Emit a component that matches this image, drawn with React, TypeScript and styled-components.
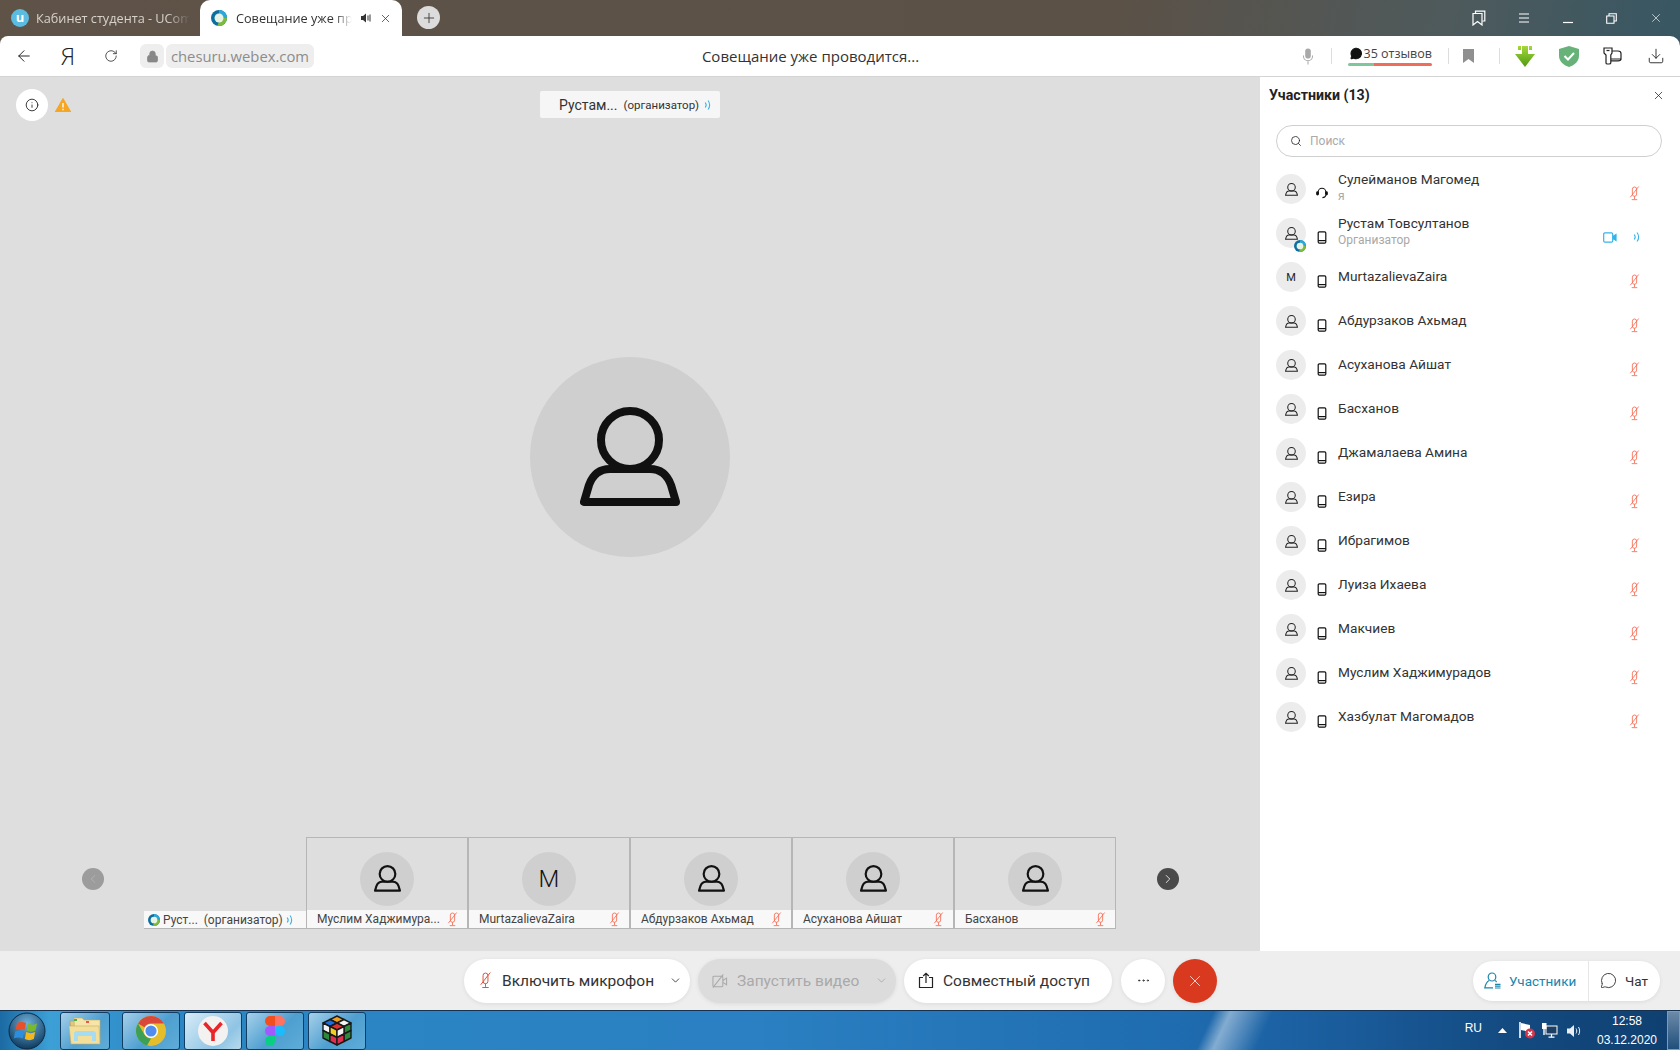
import styled, { createGlobalStyle } from "styled-components";
import { ArrowLeft, RotateCw, Lock, Search, X, Plus, Info, ChevronDown, ChevronLeft, ChevronRight, Download, MessageCircle, Ellipsis } from "lucide-react";

const GlobalStyle = createGlobalStyle`
  html, body { margin: 0; padding: 0; }
  body { width: 1680px; height: 1050px; overflow: hidden; font-family: Roboto, "Liberation Sans", sans-serif; }
  * { box-sizing: border-box; }
`;

const Page = styled.div`
  width: 1680px;
  height: 1050px;
  display: flex;
  flex-direction: column;
  background: linear-gradient(100deg, #5f5348 0%, #5b5147 60%, #4e5a5c 78%, #265468 100%);
`;

/* browser chrome */
const TabBar = styled.div`
  height: 36px;
  display: flex;
  align-items: stretch;
  padding-right: 0;
`;

const Tab = styled.div<{ $active?: boolean }>`
  width: ${(p) => (p.$active ? "202px" : "200px")};
  display: flex;
  align-items: center;
  padding-left: 11px;
  gap: ${(p) => (p.$active ? "9px" : "7px")};
  background: ${(p) => (p.$active ? "#fff" : "transparent")};
  border-radius: 10px 10px 0 0;
  color: ${(p) => (p.$active ? "#333" : "#d8d2cc")};
  font: 12.7px "Open Sans", sans-serif;
`;

const TabLabel = styled.span<{ $width: number }>`
  width: ${(p) => p.$width}px;
  overflow: hidden;
  white-space: nowrap;
  -webkit-mask-image: linear-gradient(90deg, #000 85%, transparent);
  mask-image: linear-gradient(90deg, #000 85%, transparent);
`;

const UcompFavicon = styled.span`
  width: 18px;
  height: 18px;
  border-radius: 50%;
  background: #5bbbe0;
  color: #fff;
  font: bold 13px/16px "Open Sans", sans-serif;
  text-align: center;
`;

const NewTab = styled.div`
  width: 23px;
  height: 23px;
  margin: 6px 0 0 15px;
  border-radius: 50%;
  background: #dcdcdc;
  color: #333;
  display: flex;
  align-items: center;
  justify-content: center;
`;

const WindowControls = styled.div`
  margin-left: auto;
  display: flex;
  align-items: center;
  padding-right: 17px;
  gap: 32px;
  color: #fff;
`;

const Toolbar = styled.div`
  height: 41px;
  background: #fff;
  border-radius: 8px 10px 0 0;
  border-bottom: 1px solid #d4d4d4;
  display: flex;
  align-items: center;
  padding-left: 15px;
`;

const ToolButton = styled.div<{ $mr: number }>`
  margin-right: ${(p) => p.$mr}px;
  display: flex;
  color: #222;
`;

const YaGlyph = styled.span`
  font: 300 24px "Open Sans", sans-serif;
  color: #222;
  line-height: 28px;
  width: 16px;
  text-align: center;
`;

const LockBox = styled.div`
  width: 24px;
  height: 24px;
  margin-right: 2px;
  border-radius: 6px;
  background: #eee;
  color: #888;
  display: flex;
  align-items: center;
  justify-content: center;
`;

const UrlBox = styled.div`
  width: 148px;
  height: 24px;
  border-radius: 6px;
  background: #eee;
  color: #8c8c8c;
  font: 14.8px/24px "Open Sans", sans-serif;
  text-align: center;
  white-space: nowrap;
`;

const PageTitle = styled.div`
  flex: 1;
  text-align: center;
  padding-left: 11px;
  font: 15px "Open Sans", sans-serif;
  color: #333;
`;

const ToolbarRight = styled.div`
  width: 384px;
  display: flex;
  align-items: center;
  flex: none;
`;

const Divider = styled.div<{ $ml: number }>`
  width: 1px;
  height: 16px;
  background: #ddd;
  margin-left: ${(p) => p.$ml}px;
`;

const ReviewBox = styled.div`
  width: 84px;
  margin-left: 16px;
  display: flex;
  flex-direction: column;
`;

const ReviewText = styled.div`
  display: flex;
  align-items: center;
  gap: 1px;
  height: 15px;
  padding-left: 2px;
  font: 12.5px "Open Sans", sans-serif;
  color: #444;
  white-space: nowrap;
`;

const ReviewBar = styled.div`
  height: 3px;
  margin-top: 2px;
  border-radius: 2px;
  background: linear-gradient(90deg, #7fc79b 31%, #ef6d5d 31%);
`;

const ExtIcon = styled.div<{ $ml: number }>`
  margin-left: ${(p) => p.$ml}px;
  display: flex;
`;

/* meeting area */
const Body = styled.div`
  flex: 1;
  display: flex;
  min-height: 0;
`;

const Stage = styled.div`
  position: relative;
  flex: 1;
  background: #dedede;
  display: flex;
  flex-direction: column;
  align-items: center;
  padding-top: 280px;
`;

const InfoButton = styled.div`
  position: absolute;
  left: 16px;
  top: 12px;
  width: 32px;
  height: 32px;
  border-radius: 50%;
  background: #fff;
  color: #222;
  display: flex;
  align-items: center;
  justify-content: center;
`;

const WarnIcon = styled.div`
  position: absolute;
  left: 55px;
  top: 21px;
  display: flex;
`;

const SpeakerTag = styled.div`
  position: absolute;
  left: 540px;
  top: 14px;
  width: 180px;
  height: 27px;
  background: #f6f6f6;
  border-radius: 2px;
  display: flex;
  align-items: center;
  padding-left: 19px;
  font-size: 14px;
  color: #333;
  white-space: nowrap;
`;

const TagRole = styled.span`
  font-size: 11.5px;
  margin-left: 6px;
  margin-right: 5px;
`;

const BigAvatar = styled.div`
  width: 200px;
  height: 200px;
  border-radius: 50%;
  background: #cfcfcf;
  display: flex;
  align-items: center;
  justify-content: center;
  color: #111;
`;

const Strip = styled.div`
  width: 100%;
  margin-top: auto;
  margin-bottom: 22px;
  padding-left: 82px;
  display: flex;
  align-items: center;
`;

const ArrowButton = styled.div<{ $on?: boolean; $ml: number }>`
  width: 22px;
  height: 22px;
  margin-left: ${(p) => p.$ml}px;
  margin-top: -8px;
  border-radius: 50%;
  flex: none;
  background: ${(p) => (p.$on ? "#4a4a4a" : "#9c9c9c")};
  color: ${(p) => (p.$on ? "#fff" : "#b4b4b4")};
  display: flex;
  align-items: center;
  justify-content: center;
`;

const Tile = styled.div<{ $bare?: boolean; $ml?: number }>`
  width: 162px;
  height: 92px;
  flex: none;
  margin-left: ${(p) => p.$ml ?? 0}px;
  display: flex;
  flex-direction: column;
  border: 1px solid ${(p) => (p.$bare ? "transparent" : "#b6b6b6")};
  border-width: ${(p) => (p.$bare ? "0" : "1px")};
  justify-content: ${(p) => (p.$bare ? "flex-end" : "flex-start")};
`;

const TileBody = styled.div`
  flex: 1;
  display: flex;
  align-items: center;
  justify-content: center;
  padding-top: 9px;
`;

const TileAvatar = styled.div`
  width: 54px;
  height: 54px;
  border-radius: 50%;
  background: #cfcfcf;
  color: #111;
  display: flex;
  align-items: center;
  justify-content: center;
  font-size: 24px;
  font-weight: 300;
`;

const TileLabel = styled.div<{ $bare?: boolean }>`
  height: 18px;
  background: #f8f8f8;
  display: flex;
  align-items: center;
  padding: ${(p) => (p.$bare ? "0 12px 0 4px" : "0 8px 0 10px")};
  font-size: 12px;
  color: #444;
  white-space: nowrap;
  justify-content: space-between;
  ${(p) => p.$bare && "border-bottom: 1px solid #b6b6b6;"}
`;

const BareName = styled.span`
  display: flex;
  align-items: center;
  gap: 3px;
`;

/* participants */
const Panel = styled.div`
  width: 420px;
  flex: none;
  background: #fff;
  display: flex;
  flex-direction: column;
`;

const PanelHead = styled.div`
  height: 36px;
  padding: 0 15px 0 9px;
  display: flex;
  align-items: center;
  justify-content: space-between;
  font-size: 14.2px;
  font-weight: 700;
  color: #222;
`;

const SearchBox = styled.div`
  height: 32px;
  margin: 12px 18px 0 16px;
  border: 1px solid #cfcfcf;
  border-radius: 16px;
  display: flex;
  align-items: center;
  gap: 8px;
  padding-left: 13px;
  font-size: 12px;
  color: #aaa;
`;

const List = styled.div`
  margin-top: 17px;
  padding-left: 16px;
`;

const Row = styled.div`
  height: 44px;
  display: flex;
`;

const RowAvatar = styled.div`
  position: relative;
  width: 30px;
  height: 30px;
  border-radius: 50%;
  background: #ececec;
  color: #222;
  display: flex;
  align-items: center;
  justify-content: center;
  font-size: 11px;
  margin-right: 10px;
  flex: none;
`;

const AvatarBadge = styled.div`
  position: absolute;
  right: 0;
  bottom: -4px;
  display: flex;
`;

const DeviceSlot = styled.div`
  width: 12px;
  height: 30px;
  display: flex;
  align-items: center;
  justify-content: center;
  margin-right: 10px;
  margin-top: 4px;
  flex: none;
  color: #111;
`;

const RowText = styled.div`
  flex: 1;
  height: 28px;
  display: flex;
  flex-direction: column;
  justify-content: center;
`;

const RowName = styled.div`
  font-size: 13.7px;
  line-height: 16px;
  color: #333;
`;

const RowSub = styled.div`
  font-size: 12px;
  line-height: 18px;
  color: #a8a8a8;
`;

const RowIcons = styled.div`
  width: 100px;
  height: 30px;
  margin-top: 4px;
  padding-right: 39px;
  flex: none;
  display: flex;
  align-items: center;
  justify-content: flex-end;
  gap: 16px;
`;

/* bottom controls */
const ControlBar = styled.div`
  height: 59px;
  flex: none;
  background: #eeeeee;
  display: flex;
  align-items: center;
  padding-left: 464px;
`;

const Pill = styled.div<{ $w: number; $off?: boolean; $ml?: number }>`
  width: ${(p) => p.$w}px;
  height: 44px;
  margin-left: ${(p) => p.$ml ?? 8}px;
  padding-left: 14px;
  border-radius: 22px;
  background: ${(p) => (p.$off ? "#dcdcdc" : "#fff")};
  color: ${(p) => (p.$off ? "#a9a9a9" : "#333")};
  box-shadow: 0 1px 4px rgba(0, 0, 0, 0.08);
  display: flex;
  align-items: center;
  gap: 9px;
  font-size: 15.5px;
  white-space: nowrap;
  flex: none;
`;

const PillChevron = styled.span`
  margin-left: auto;
  margin-right: 8px;
  display: flex;
`;

const RoundButton = styled.div<{ $red?: boolean; $ml: number }>`
  width: 44px;
  height: 44px;
  margin-left: ${(p) => p.$ml}px;
  border-radius: 50%;
  background: ${(p) => (p.$red ? "#d8391f" : "#fff")};
  color: ${(p) => (p.$red ? "#fff" : "#333")};
  box-shadow: 0 1px 4px rgba(0, 0, 0, 0.08);
  display: flex;
  align-items: center;
  justify-content: center;
  flex: none;
`;

const SideSwitch = styled.div`
  margin-left: auto;
  margin-right: 20px;
  width: 187px;
  height: 40px;
  border-radius: 20px;
  background: #fff;
  box-shadow: 0 1px 4px rgba(0, 0, 0, 0.08);
  display: flex;
  align-items: center;
  font-size: 13.5px;
`;

const SideItem = styled.div<{ $active?: boolean; $w: number }>`
  width: ${(p) => p.$w}px;
  height: 100%;
  display: flex;
  align-items: center;
  padding-left: 11px;
  gap: 8px;
  color: ${(p) => (p.$active ? "#1a86ad" : "#333")};
  border-right: ${(p) => (p.$active ? "1px solid #e6e6e6" : "none")};
`;

/* windows taskbar */
const Taskbar = styled.div`
  height: 40px;
  flex: none;
  border-top: 1px solid #16324f;
  background:
    linear-gradient(115deg, transparent 71.5%, rgba(255, 255, 255, 0.45) 72.5%, rgba(255, 255, 255, 0.08) 74.5%, transparent 75%),
    linear-gradient(90deg, #1b6aa3 0%, #3ca0d6 3%, #2b86c4 10%, #2a80c2 45%, #1f6cb0 70%, #1a5c9c 80%, #134a80 90%, #0f3f70 100%);
  display: flex;
  align-items: center;
`;

const StartOrb = styled.div`
  width: 60px;
  display: flex;
  justify-content: center;
  padding-right: 6px;
  flex: none;
`;

const TaskButton = styled.div<{ $w: number; $mr: number; $lit?: boolean }>`
  width: ${(p) => p.$w}px;
  height: 38px;
  margin-right: ${(p) => p.$mr}px;
  border: 1px solid #123c60;
  border-radius: 3px;
  background: ${(p) =>
    p.$lit
      ? "linear-gradient(135deg, #d7ecf8, #8fc4e4 70%, #b8daee)"
      : "linear-gradient(135deg, #a6d0ea, #4e9fd0 55%, #5eacd8)"};
  display: flex;
  align-items: center;
  justify-content: center;
  flex: none;
`;

const Tray = styled.div`
  margin-left: auto;
  display: flex;
  align-items: center;
  height: 100%;
  color: #fff;
`;

const TrayLang = styled.span`
  font: 12px "Liberation Sans", sans-serif;
  margin-right: 16px;
  margin-top: -6px;
`;

const TrayIcon = styled.div<{ $mr: number }>`
  margin-right: ${(p) => p.$mr}px;
  display: flex;
`;

const Clock = styled.div`
  width: 76px;
  text-align: center;
  font: 12px/19px "Liberation Sans", sans-serif;
`;

const ShowDesktop = styled.div`
  width: 13px;
  height: 100%;
  margin-left: 2px;
  border: 1px solid #7f9ab3;
  background: linear-gradient(180deg, #6c8aa8, #204f7c);
`;

/* drawings */
function PersonIcon({ size }: { size: number }) {
  return (
    <svg width={size} height={size} viewBox="0 0 100 100" fill="none" stroke="currentColor" strokeWidth="8" strokeLinejoin="round">
      <circle cx="50" cy="33" r="29" />
      <path d="M4 95H96L91 78C87 67 80 62 70 62H30C20 62 13 67 9 78Z" />
    </svg>
  );
}

function MicOff({ color = "#f4694f", size = 14 }: { color?: string; size?: number }) {
  return (
    <svg width={size} height={size + 2} viewBox="0 0 14 16" fill="none" stroke={color} strokeWidth="0.9">
      <rect x="4.7" y="1" width="4.6" height="10" rx="2.3" />
      <path d="M7 11V14M4 14.6H10" />
      <path d="M11.5 .5L2.5 12" />
    </svg>
  );
}

function Phone() {
  return (
    <svg width="10" height="13" viewBox="0 0 10 13" fill="none" stroke="currentColor" strokeWidth="1.2">
      <rect x="1.2" y=".8" width="7.6" height="11.4" rx="1.2" />
      <path d="M1.2 9.6H8.8" />
    </svg>
  );
}

function Headset() {
  return (
    <svg width="14" height="14" viewBox="0 0 14 14" fill="none" stroke="currentColor" strokeWidth="1.2">
      <path d="M2.5 8V6A4.5 4.5 0 0 1 11.5 6V8" />
      <rect x=".8" y="5.6" width="2" height="3.6" rx="1" fill="currentColor" />
      <rect x="11.2" y="5.6" width="2" height="3.6" rx="1" fill="currentColor" />
      <path d="M11.5 9.5C11 11.5 9.5 12.4 7.5 12.4" />
    </svg>
  );
}

function WebexBall({ size }: { size: number }) {
  return (
    <svg width={size} height={size} viewBox="0 0 20 20">
      <circle cx="10" cy="10" r="10" fill="#0d6f9f" />
      <path d="M10 0A10 10 0 0 1 20 10L14 10A4 4 0 0 0 10 6Z" fill="#2ba8d8" />
      <path d="M20 10A10 10 0 0 1 8 19.8L10 14.5A4.5 4.5 0 0 0 14.5 10Z" fill="#7dbb3c" />
      <circle cx="10" cy="10" r="5.6" fill="#e8f3e6" />
    </svg>
  );
}

function Waves() {
  return (
    <svg width="8" height="12" viewBox="0 0 8 12" fill="none" stroke="#35b4e8" strokeWidth="1.1">
      <path d="M1.2 3.5C2.4 5 2.4 7 1.2 8.5M4 1.5C6.2 4 6.2 8 4 10.5" />
    </svg>
  );
}

function VideoOn() {
  return (
    <svg width="14" height="11" viewBox="0 0 14 11" fill="none" stroke="#35b4e8" strokeWidth="1.2">
      <rect x=".7" y=".9" width="9" height="9.2" rx="1.2" />
      <path d="M9.8 4.4L13 2.6V8.4L9.8 6.6" fill="#35b4e8" />
    </svg>
  );
}

function SlashedCamera() {
  return (
    <svg width="16" height="16" viewBox="0 0 17 17" fill="none" stroke="#a9a9a9" strokeWidth="1.1">
      <rect x="1" y="3.5" width="10.5" height="11" rx="1" />
      <path d="M11.5 8L15.5 5.5V12.5L11.5 10M12 1.5L1 15.5" />
    </svg>
  );
}

function ShareIcon() {
  return (
    <svg width="16" height="17" viewBox="0 0 16 17" fill="none" stroke="#222" strokeWidth="1.2">
      <path d="M5 5.5H1.5V15.5H14.5V5.5H11M8 11V1.5M5.2 4L8 1.3L10.8 4" />
    </svg>
  );
}

function PeopleListIcon() {
  return (
    <svg width="17" height="17" viewBox="0 0 17 17" fill="none" stroke="#1a86ad" strokeWidth="1.2">
      <ellipse cx="8" cy="5" rx="3.8" ry="4" />
      <path d="M5 8.6C3 9.8 1.5 12.5 .8 15.8H9M11 8.6C11.6 9 12.1 9.4 12.6 10M11 12.4H16.5M11 14.2H16.5M11 16H16.5" />
    </svg>
  );
}

function Mic() {
  return (
    <svg width="12" height="17" viewBox="0 0 12 17" fill="#a8a8a8">
      <rect x="3.2" y=".5" width="5.6" height="10" rx="2.8" />
      <path d="M1 7.5V8.2A5 5 0 0 0 11 8.2V7.5H10V8.2A4 4 0 0 1 2 8.2V7.5ZM5.5 13H6.5V16.5H5.5Z" />
    </svg>
  );
}

function BookmarkIcon() {
  return (
    <svg width="11" height="14" viewBox="0 0 11 14" fill="#8f8f8f">
      <path d="M0 0H11V14L5.5 10L0 14Z" />
    </svg>
  );
}

function GreenArrow() {
  return (
    <svg width="20" height="21" viewBox="0 0 20 21">
      <defs>
        <linearGradient id="ga" x1="0" y1="0" x2="0" y2="1">
          <stop offset="0" stopColor="#a6d83a" />
          <stop offset="1" stopColor="#4f9a12" />
        </linearGradient>
      </defs>
      <path d="M3 0H6V4H3ZM14 0H17V4H14ZM7 0H13V8H20L10 21L0 8H7Z" fill="url(#ga)" />
    </svg>
  );
}

function Shield() {
  return (
    <svg width="20" height="21" viewBox="0 0 20 21">
      <path d="M10 0L20 3V10C20 15.5 15 19.5 10 21C5 19.5 0 15.5 0 10V3Z" fill="#67b279" />
      <path d="M5.5 10L9 13.5L15 7" fill="none" stroke="#fff" strokeWidth="2" />
    </svg>
  );
}

function SaveExt() {
  return (
    <svg width="19" height="18" viewBox="0 0 19 18" fill="none" stroke="#222" strokeWidth="1.2">
      <path d="M1 1H9V6L7.8 8V16C7.8 17 6.5 17 6 17H4.5C3.5 17 3 16.5 3 16V8L1 6Z" />
      <path d="M9 4H15C16.5 4 18 5 18 6.5V12H8M8 13.8H15C17 13.8 18 13 18 12" />
      <path d="M3.5 3.5H6.5" />
    </svg>
  );
}

function CopyBookmark() {
  return (
    <svg width="14" height="16" viewBox="0 0 14 16" fill="none" stroke="#fff" strokeWidth="1.2">
      <path d="M3.5 3V1.2H12.8V11H10.5" />
      <path d="M1 3.5H10V15L5.5 11.5L1 15Z" />
    </svg>
  );
}

function HamburgerIcon() {
  return (
    <svg width="12" height="10" viewBox="0 0 12 10" stroke="#fff" strokeWidth="1">
      <path d="M1 1H11M1 5H11M1 9H11" />
    </svg>
  );
}

function MinimizeIcon() {
  return (
    <svg width="12" height="12" viewBox="0 0 12 12" stroke="#fff" strokeWidth="1.2">
      <path d="M1 10.5H11" />
    </svg>
  );
}

function RestoreIcon() {
  return (
    <svg width="11" height="11" viewBox="0 0 11 11" fill="none" stroke="#fff" strokeWidth="1.1">
      <path d="M3 3V.7H10.3V8H8M.7 3H8V10.3H.7Z" />
    </svg>
  );
}

function WarnTriangle() {
  return (
    <svg width="16" height="14" viewBox="0 0 16 14">
      <path d="M8 .5L15.8 14H.2Z" fill="#f5a623" stroke="#f5a623" strokeLinejoin="round" />
      <path d="M8 5V9.5M8 10.8V12.2" stroke="#fff" strokeWidth="1.4" />
    </svg>
  );
}

function SpeakerSmall() {
  return (
    <svg width="10" height="10" viewBox="0 0 10 10" fill="#333">
      <path d="M0 3H2L5 .5V9.5L2 7H0Z" />
      <path d="M6.5 2.5H7.5V7.5H6.5ZM8.5 1.5H9.5V8.5H8.5Z" />
    </svg>
  );
}

function ChromeLogo() {
  return (
    <svg width="30" height="30" viewBox="0 0 30 30">
      <circle cx="15" cy="15" r="15" fill="#e4bd2c" />
      <path d="M15 0A15 15 0 0 1 28 7.5H15A7.5 7.5 0 0 0 8.5 11.2L2 7.5A15 15 0 0 1 15 0Z" fill="#d9483b" />
      <path d="M2 7.5L8.5 18.8A7.5 7.5 0 0 0 15 22.5L11 29.5A15 15 0 0 1 2 7.5Z" fill="#3b9f55" />
      <circle cx="15" cy="15" r="7" fill="#fff" />
      <circle cx="15" cy="15" r="5.6" fill="#4f8df0" />
    </svg>
  );
}

function YandexLogo() {
  return (
    <svg width="30" height="30" viewBox="0 0 30 30">
      <circle cx="15" cy="15" r="15" fill="#f4f2f0" />
      <path d="M6.5 7L15 16.5V25M23.5 7L15 16.5" fill="none" stroke="#e8262a" strokeWidth="3.6" />
    </svg>
  );
}

function FigmaLogo() {
  return (
    <svg width="20" height="30" viewBox="0 0 20 30">
      <path d="M0 5A5 5 0 0 1 5 0H10V10H5A5 5 0 0 1 0 5Z" fill="#f24e1e" />
      <path d="M10 0H15A5 5 0 0 1 15 10H10Z" fill="#ff7262" />
      <path d="M0 15A5 5 0 0 1 5 10H10V20H5A5 5 0 0 1 0 15Z" fill="#a259ff" />
      <circle cx="15" cy="15" r="5" fill="#1abcfe" />
      <path d="M0 25A5 5 0 0 1 5 20H10V25A5 5 0 0 1 0 25Z" fill="#0acf83" />
    </svg>
  );
}

function CubeLogo() {
  return (
    <svg width="32" height="32" viewBox="0 0 32 32" stroke="#1a1a1a" strokeWidth="1.4" strokeLinejoin="round">
      <path d="M16 1L23 4.5L16 8L9 4.5Z" fill="#f0a020" />
      <path d="M9 4.5L16 8L9 11.5L2 8Z" fill="#1c6fe0" />
      <path d="M23 4.5L30 8L23 11.5L16 8Z" fill="#f4f4f4" />
      <path d="M16 8L23 11.5L16 15L9 11.5Z" fill="#e03030" />
      <path d="M2 8L9 11.5V19L2 15.5Z" fill="#f4f4f4" />
      <path d="M9 11.5L16 15V22.5L9 19Z" fill="#f0d020" />
      <path d="M2 15.5L9 19V26.5L2 23Z" fill="#2a8a3a" />
      <path d="M9 19L16 22.5V30L9 26.5Z" fill="#e03050" />
      <path d="M23 11.5L30 8V15.5L23 19Z" fill="#2a8a3a" />
      <path d="M16 15L23 11.5V19L16 22.5Z" fill="#f4f4f4" />
      <path d="M23 19L30 15.5V23L23 26.5Z" fill="#2a8a3a" />
      <path d="M16 22.5L23 19V26.5L16 30Z" fill="#e03050" />
    </svg>
  );
}

function ExplorerLogo() {
  return (
    <svg width="32" height="28" viewBox="0 0 32 28">
      <path d="M1 4H12L14 6H29V25H3Z" fill="#e2c878" stroke="#b89a50" strokeWidth=".6" />
      <path d="M5 1H13L15 3H31V24H6Z" fill="#f6e5a8" stroke="#c7ab62" strokeWidth=".6" />
      <path d="M5 2H8V4H5Z" fill="#4bae4f" />
      <path d="M17 4H20V6H17Z" fill="#e65a4a" />
      <path d="M0 9H30L31 27H2Z" fill="#f3df9a" stroke="#c7ab62" strokeWidth=".6" />
      <path d="M5 24V17C5 15 6 14 8 14H24C26 14 27 15 27 17V24H23V19H9V24Z" fill="#a6dcf2" />
    </svg>
  );
}

function StartLogo() {
  return (
    <svg width="38" height="38" viewBox="0 0 38 38">
      <defs>
        <radialGradient id="orb" cx="50%" cy="30%" r="70%">
          <stop offset="0" stopColor="#6fb2dc" />
          <stop offset="1" stopColor="#0f3a5e" />
        </radialGradient>
      </defs>
      <circle cx="19" cy="19" r="18" fill="url(#orb)" stroke="#0c2a46" />
      <path d="M9 11C12 9.5 15 9.8 18 11L16.5 18C13.5 16.8 10.5 16.6 7.5 18Z" fill="#e8502c" />
      <path d="M20 11.5C23 13 26 13 29 11.5L27.5 18.5C24.5 20 21.5 20 18.6 18.5Z" fill="#7ab82c" />
      <path d="M7.2 19.5C10.2 18.2 13.2 18.4 16.2 19.6L14.8 26.5C11.8 25.2 8.8 25 5.8 26.4Z" fill="#2b8fe0" />
      <path d="M18.2 20C21.2 21.5 24.2 21.5 27.2 20L25.8 27C22.8 28.5 19.8 28.5 16.8 27Z" fill="#f2b81c" />
    </svg>
  );
}

function TrayFlag() {
  return (
    <svg width="18" height="17" viewBox="0 0 18 17">
      <path d="M2 0V16" stroke="#fff" strokeWidth="1.6" />
      <path d="M3 1L12 3V10L3 8Z" fill="#fff" />
      <circle cx="12" cy="11.5" r="5" fill="#d6344a" />
      <path d="M10 9.5L14 13.5M14 9.5L10 13.5" stroke="#fff" strokeWidth="1.5" />
    </svg>
  );
}

function TrayNetwork() {
  return (
    <svg width="16" height="15" viewBox="0 0 16 15" fill="none" stroke="#fff">
      <rect x="4" y="3" width="11" height="8" fill="#1d3f63" />
      <path d="M9.5 11V14M6.5 14.2H12.5" strokeWidth="1.2" />
      <rect x="0" y="0" width="4.5" height="6" fill="#fff" stroke="none" />
      <path d="M2 6V12" strokeWidth="1.4" />
    </svg>
  );
}

function TrayVolume() {
  return (
    <svg width="15" height="14" viewBox="0 0 15 14" fill="#e8eef4">
      <path d="M0 4.5H3L7 1V13L3 9.5H0Z" />
      <path d="M9 4.5C10 6 10 8 9 9.5M11.5 3C13 5.5 13 8.5 11.5 11" fill="none" stroke="#e8eef4" />
    </svg>
  );
}

function TrayUp() {
  return (
    <svg width="9" height="5" viewBox="0 0 9 5" fill="#fff">
      <path d="M4.5 0L9 5H0Z" />
    </svg>
  );
}

function SmallCross() {
  return <X size={13} strokeWidth={1.4} color="#222" />;
}

const participants = [
  { name: "Сулейманов Магомед", sub: "я", headset: true },
  { name: "Рустам Товсултанов", sub: "Организатор", host: true },
  { name: "MurtazalievaZaira", letter: "M" },
  { name: "Абдурзаков Ахьмад" },
  { name: "Асуханова Айшат" },
  { name: "Басханов" },
  { name: "Джамалаева Амина" },
  { name: "Езира" },
  { name: "Ибрагимов" },
  { name: "Луиза Ихаева" },
  { name: "Макчиев" },
  { name: "Муслим Хаджимурадов" },
  { name: "Хазбулат Магомадов" },
];

const tiles = [
  { name: "Муслим Хаджимура..." },
  { name: "MurtazalievaZaira", letter: "M" },
  { name: "Абдурзаков Ахьмад" },
  { name: "Асуханова Айшат" },
  { name: "Басханов" },
];

export default function App() {
  return (
    <Page>
      <GlobalStyle />
      <TabBar>
        <Tab>
          <UcompFavicon>u</UcompFavicon>
          <TabLabel $width={154}>Кабинет студента - UCompus</TabLabel>
        </Tab>
        <Tab $active>
          <WebexBall size={16} />
          <TabLabel $width={116}>Совещание уже проводится</TabLabel>
          <SpeakerSmall />
          <X size={13} strokeWidth={1.4} color="#333" style={{ marginLeft: -1 }} />
        </Tab>
        <NewTab>
          <Plus size={16} strokeWidth={1.3} />
        </NewTab>
        <WindowControls>
          <CopyBookmark />
          <HamburgerIcon />
          <MinimizeIcon />
          <RestoreIcon />
          <X size={14} strokeWidth={1.1} color="#fff" />
        </WindowControls>
      </TabBar>

      <Toolbar>
        <ToolButton $mr={27}>
          <ArrowLeft size={18} strokeWidth={1.3} />
        </ToolButton>
        <ToolButton $mr={28}>
          <YaGlyph>Я</YaGlyph>
        </ToolButton>
        <ToolButton $mr={22}>
          <RotateCw size={14} strokeWidth={1.3} />
        </ToolButton>
        <LockBox>
          <Lock size={13} fill="#888" strokeWidth={1.6} />
        </LockBox>
        <UrlBox>chesuru.webex.com</UrlBox>
        <PageTitle>Совещание уже проводится...</PageTitle>
        <ToolbarRight>
          <ExtIcon $ml={6}>
            <Mic />
          </ExtIcon>
          <Divider $ml={17} />
          <ReviewBox>
            <ReviewText>
              <MessageCircle size={13} fill="#111" color="#111" />
              35 отзывов
            </ReviewText>
            <ReviewBar />
          </ReviewBox>
          <Divider $ml={16} />
          <ExtIcon $ml={14}>
            <BookmarkIcon />
          </ExtIcon>
          <Divider $ml={25} />
          <ExtIcon $ml={15}>
            <GreenArrow />
          </ExtIcon>
          <ExtIcon $ml={24}>
            <Shield />
          </ExtIcon>
          <ExtIcon $ml={24}>
            <SaveExt />
          </ExtIcon>
          <ExtIcon $ml={25}>
            <Download size={18} strokeWidth={1.2} color="#222" />
          </ExtIcon>
        </ToolbarRight>
      </Toolbar>

      <Body>
        <Stage>
          <InfoButton>
            <Info size={14} strokeWidth={1.5} />
          </InfoButton>
          <WarnIcon>
            <WarnTriangle />
          </WarnIcon>
          <SpeakerTag>
            Рустам...
            <TagRole>(организатор)</TagRole>
            <Waves />
          </SpeakerTag>
          <BigAvatar>
            <PersonIcon size={100} />
          </BigAvatar>
          <Strip>
            <ArrowButton $ml={0}>
              <ChevronLeft size={14} strokeWidth={1.4} />
            </ArrowButton>
            <Tile $bare $ml={40}>
              <TileLabel $bare>
                <BareName>
                  <WebexBall size={12} />
                  Руст...&nbsp;&nbsp;(организатор)
                </BareName>
                <Waves />
              </TileLabel>
            </Tile>
            {tiles.map((t) => (
              <Tile key={t.name}>
                <TileBody>
                  <TileAvatar>{t.letter ?? <PersonIcon size={27} />}</TileAvatar>
                </TileBody>
                <TileLabel>
                  {t.name}
                  <MicOff size={13} />
                </TileLabel>
              </Tile>
            ))}
            <ArrowButton $on $ml={41}>
              <ChevronRight size={14} strokeWidth={1.4} />
            </ArrowButton>
          </Strip>
        </Stage>

        <Panel>
          <PanelHead>
            Участники (13)
            <SmallCross />
          </PanelHead>
          <SearchBox>
            <Search size={12} strokeWidth={1.6} color="#222" />
            Поиск
          </SearchBox>
          <List>
            {participants.map((p) => (
              <Row key={p.name}>
                <RowAvatar>
                  {p.letter ?? <PersonIcon size={13} />}
                  {p.host && (
                    <AvatarBadge>
                      <WebexBall size={12} />
                    </AvatarBadge>
                  )}
                </RowAvatar>
                <DeviceSlot>{p.headset ? <Headset /> : <Phone />}</DeviceSlot>
                <RowText>
                  <RowName>{p.name}</RowName>
                  {p.sub && <RowSub>{p.sub}</RowSub>}
                </RowText>
                <RowIcons>
                  {p.host ? (
                    <>
                      <VideoOn />
                      <Waves />
                    </>
                  ) : (
                    <MicOff size={13} />
                  )}
                </RowIcons>
              </Row>
            ))}
          </List>
        </Panel>
      </Body>

      <ControlBar>
        <Pill $w={226} $ml={0}>
          <MicOff color="#e04a32" size={15} />
          Включить микрофон
          <PillChevron>
            <ChevronDown size={13} strokeWidth={1.6} />
          </PillChevron>
        </Pill>
        <Pill $w={198} $off>
          <SlashedCamera />
          Запустить видео
          <PillChevron>
            <ChevronDown size={13} strokeWidth={1.6} />
          </PillChevron>
        </Pill>
        <Pill $w={208}>
          <ShareIcon />
          Совместный доступ
        </Pill>
        <RoundButton $ml={9}>
          <Ellipsis size={15} strokeWidth={1.5} />
        </RoundButton>
        <RoundButton $red $ml={8}>
          <X size={18} strokeWidth={1} />
        </RoundButton>
        <SideSwitch>
          <SideItem $active $w={116}>
            <PeopleListIcon />
            Участники
          </SideItem>
          <SideItem $w={70}>
            <MessageCircle size={17} strokeWidth={1.2} color="#222" />
            Чат
          </SideItem>
        </SideSwitch>
      </ControlBar>

      <Taskbar>
        <StartOrb>
          <StartLogo />
        </StartOrb>
        <TaskButton $w={50} $mr={12}>
          <ExplorerLogo />
        </TaskButton>
        <TaskButton $w={58} $mr={4}>
          <ChromeLogo />
        </TaskButton>
        <TaskButton $w={58} $mr={4} $lit>
          <YandexLogo />
        </TaskButton>
        <TaskButton $w={58} $mr={4}>
          <FigmaLogo />
        </TaskButton>
        <TaskButton $w={58} $mr={0}>
          <CubeLogo />
        </TaskButton>
        <Tray>
          <TrayLang>RU</TrayLang>
          <TrayIcon $mr={11}>
            <TrayUp />
          </TrayIcon>
          <TrayIcon $mr={6}>
            <TrayFlag />
          </TrayIcon>
          <TrayIcon $mr={9}>
            <TrayNetwork />
          </TrayIcon>
          <TrayIcon $mr={7}>
            <TrayVolume />
          </TrayIcon>
          <Clock>
            12:58
            <br />
            03.12.2020
          </Clock>
          <ShowDesktop />
        </Tray>
      </Taskbar>
    </Page>
  );
}
